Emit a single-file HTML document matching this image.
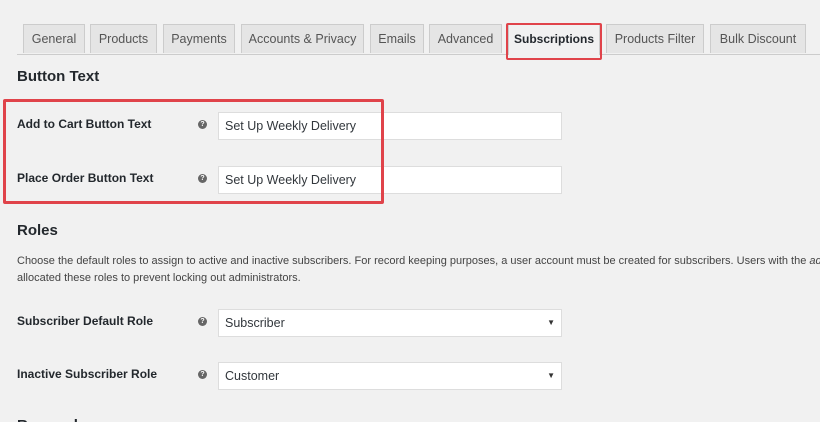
<!DOCTYPE html>
<html><head><style>
body{margin:0;width:820px;height:422px;background:#f1f1f1;font-family:"Liberation Sans",sans-serif;color:#23282d;position:relative;overflow:hidden}
.a{position:absolute;white-space:nowrap}
.tab{position:absolute;top:24px;height:29px;background:#e5e5e5;border:1px solid #ccc;border-bottom:none;font-size:12.5px;color:#555;line-height:29px;text-align:center;box-sizing:border-box}
.lbl{font-size:12px;font-weight:bold;color:#23282d}
.inp{position:absolute;left:218px;width:344px;height:28px;background:#fff;border:1px solid #ddd;box-sizing:border-box;font-size:12.5px;line-height:26px;padding-left:6px;color:#32373c}
.q{position:absolute;left:198px;width:9px;height:9px;border-radius:50%;background:#666;color:#fff;font-size:7px;font-weight:bold;text-align:center;line-height:9px}
.arr{position:absolute;right:6px;top:0;font-size:8px;color:#333}
</style></head><body>
<div class="a" style="left:17px;top:54px;width:803px;border-top:1px solid #ccc"></div>
<div class="tab" style="left:23px;width:62px">General</div>
<div class="tab" style="left:90px;width:67px">Products</div>
<div class="tab" style="left:163px;width:72px">Payments</div>
<div class="tab" style="left:241px;width:123px">Accounts &amp; Privacy</div>
<div class="tab" style="left:370px;width:54px">Emails</div>
<div class="tab" style="left:429px;width:73px">Advanced</div>
<div class="tab" style="left:508px;width:92px;background:#f1f1f1;color:#23282d;height:31px;font-weight:bold;font-size:12px">Subscriptions</div>
<div class="a" style="left:506px;top:23px;width:92px;height:33px;border:2px solid #e0434a;border-radius:2px"></div>
<div class="tab" style="left:606px;width:98px">Products Filter</div>
<div class="tab" style="left:710px;width:96px">Bulk Discount</div>

<div class="a" style="left:17px;top:68px;font-size:15px;font-weight:bold;color:#23282d">Button Text</div>
<div class="a lbl" style="left:17px;top:117px">Add to Cart Button Text</div>
<div class="q" style="top:120px">?</div>
<div class="inp" style="top:112px">Set Up Weekly Delivery</div>
<div class="a lbl" style="left:17px;top:171px">Place Order Button Text</div>
<div class="q" style="top:174px">?</div>
<div class="inp" style="top:166px">Set Up Weekly Delivery</div>
<div class="a" style="left:3px;top:99px;width:375px;height:99px;border:3px solid #e0434a;border-radius:2px"></div>

<div class="a" style="left:17px;top:222px;font-size:15px;font-weight:bold">Roles</div>
<div class="a" style="left:17px;top:253px;width:803px;overflow:hidden;font-size:11px;color:#444;line-height:17px">Choose the default roles to assign to active and inactive subscribers. For record keeping purposes, a user account must be created for subscribers. Users with the <i>ad</i><br>allocated these roles to prevent locking out administrators.</div>
<div class="a lbl" style="left:17px;top:314px">Subscriber Default Role</div>
<div class="q" style="top:317px">?</div>
<div class="inp" style="top:309px">Subscriber<span class="arr">▼</span></div>
<div class="a lbl" style="left:17px;top:367px">Inactive Subscriber Role</div>
<div class="q" style="top:370px">?</div>
<div class="inp" style="top:362px">Customer<span class="arr">▼</span></div>
<div class="a" style="left:17px;top:417px;height:5px;overflow:hidden;font-size:15px;font-weight:bold">Renewals</div>
</body></html>
